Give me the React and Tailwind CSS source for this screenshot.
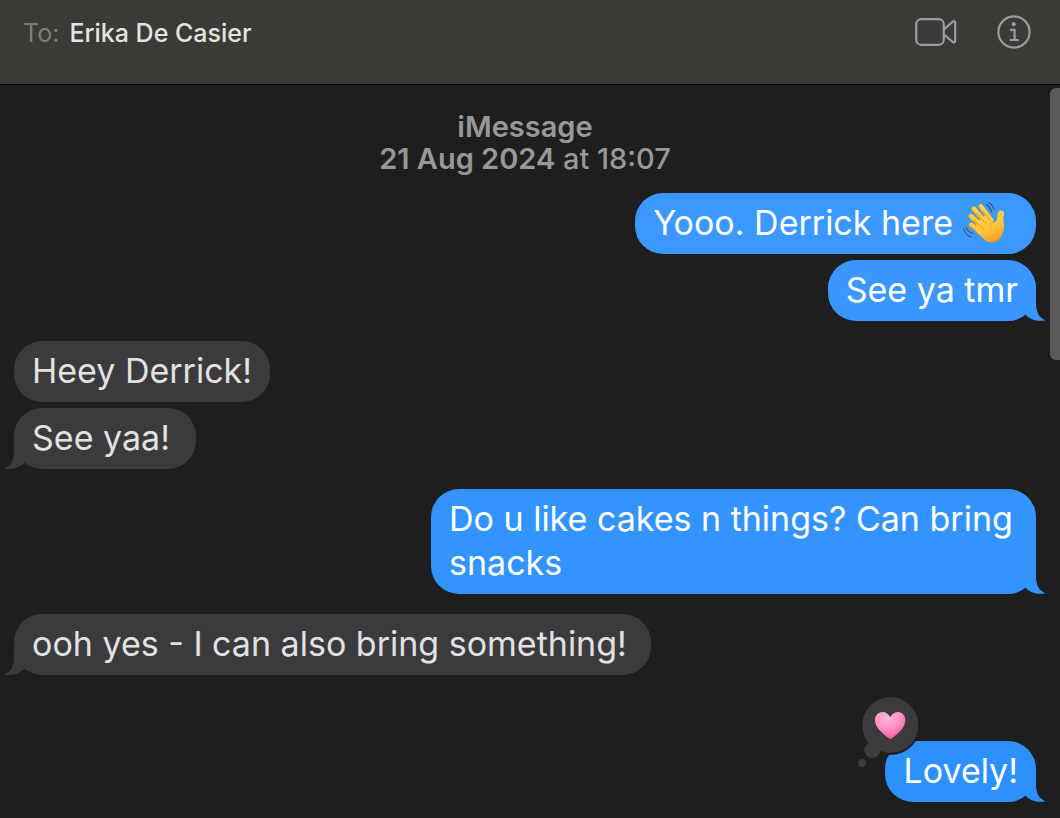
const messages = [
    { id: 1, text: "Yooo. Derrick here", mine: true, wave: true, color: "bg-[#3b98ff]", spacing: "mt-[18px]", padding: "pl-[18px] pr-[31px]" },
    { id: 2, text: "See ya tmr", mine: true, tail: true, color: "bg-[#3a97ff]", tailColor: "text-[#3a97ff]", spacing: "mt-[6px]", padding: "px-[18px]" },
    { id: 3, text: "Heey Derrick!", color: "bg-[#3b3b3d]", spacing: "mt-5", padding: "px-[18px]" },
    { id: 4, text: "See yaa!", tail: true, color: "bg-[#3b3b3d]", tailColor: "text-[#3b3b3d]", spacing: "mt-[6px]", padding: "pl-[18px] pr-[26px]" },
    { id: 5, text: "Do u like cakes n things? Can bring snacks", mine: true, tail: true, color: "bg-[#3394ff]", tailColor: "text-[#3394ff]", spacing: "mt-5", padding: "px-[18px]" },
    { id: 6, text: "ooh yes - I can also bring something!", tail: true, color: "bg-[#3b3b3d]", tailColor: "text-[#3b3b3d]", spacing: "mt-5", padding: "pl-[18px] pr-[24px]" },
    { id: 7, text: "Lovely!", mine: true, tail: true, loved: true, color: "bg-[#2d90ff]", tailColor: "text-[#2d90ff]", spacing: "mt-[66px]", padding: "px-[18px]" }
]

function VideoIcon() {
    return (
        <svg width="42" height="28" viewBox="0 0 42 28" fill="none" stroke="currentColor" strokeWidth="2.2" strokeLinejoin="round">
            <rect x="1.2" y="1.2" width="27.6" height="25.6" rx="5" />
            <path d="M29 11.5 37.6 3.6C38.8 2.6 40.2 3.2 40.2 4.6V22.8C40.2 24.2 38.8 24.8 37.6 23.8L29 16.5" />
        </svg>
    )
}

function InfoIcon() {
    return (
        <svg width="34" height="34" viewBox="0 0 34 34" fill="none" stroke="currentColor" strokeWidth="2.2" strokeLinecap="round" strokeLinejoin="round">
            <circle cx="17" cy="17" r="15.6" />
            <circle cx="16.7" cy="9.2" r="2.1" fill="currentColor" stroke="none" />
            <path d="M13.8 14.8H17.6V25M13.6 25H21" />
        </svg>
    )
}

function WaveEmoji() {
    return (
        <svg role="img" aria-label="Waving hand" className="shrink-0" width="42" height="43" viewBox="36 32 126 128" fill="none">
            <defs>
                <linearGradient id="skin" x1="70" y1="50" x2="125" y2="158" gradientUnits="userSpaceOnUse">
                    <stop offset="0" stopColor="#ffd24a" />
                    <stop offset="0.65" stopColor="#ffc53a" />
                    <stop offset="1" stopColor="#f09a1c" />
                </linearGradient>
            </defs>
            <g stroke="#e5981e" strokeWidth="15" strokeLinecap="round">
                <path d="M89 48 120 90M68 55 106 100M59 77 98 113M60 103 95 131" />
            </g>
            <g stroke="url(#skin)" strokeWidth="12" strokeLinecap="round">
                <path d="M90 47 122 90M69 54 108 100M60 76 100 113M61 102 97 131" />
            </g>
            <path
                d="M104 72 124 93C131 99 137 92 138 84L140 69C142 60 149 57 155 61C160 64 161 70 158 77C155 87 160 96 159 108C158 126 151 141 140 150C129 158 116 158 104 150L78 127 75 100Z"
                fill="url(#skin)"
            />
            <path d="M94 61 117 88M76 69 106 101M70 91 98 116" stroke="#d98c20" strokeWidth="2.5" strokeLinecap="round" />
            <path d="M125 94C119 98 116 105 119 113" stroke="#e6a329" strokeWidth="2.5" strokeLinecap="round" />
            <path d="M107 43Q118 50 122 65M113 36Q126 43 130 58M45 110Q51 126 66 129M38 115Q44 134 60 139" stroke="#455466" strokeWidth="3.5" strokeLinecap="round" />
        </svg>
    )
}

function Tail({ mine, color }) {
    return (
        <svg
            aria-hidden="true"
            className={`absolute bottom-0 ${color} ${mine ? "-right-[10px]" : "-left-[10px] -scale-x-100"}`}
            width="21"
            height="28"
            viewBox="225 309 63 84"
        >
            <path d="M258 309V340C258 366 267 384 287 391C264 396 240 389 228 376L225 366 250 309Z" fill="currentColor" />
        </svg>
    )
}

function HeartReaction() {
    return (
        <svg role="img" aria-label="Loved" className="absolute -left-7 -top-[46px]" width="64" height="74" viewBox="51 30 192 222">
            <defs>
                <radialGradient id="heart" cx="0.4" cy="0.2" r="0.85">
                    <stop offset="0" stopColor="#ffb8da" />
                    <stop offset="0.55" stopColor="#ff8fc2" />
                    <stop offset="1" stopColor="#f9488f" />
                </radialGradient>
            </defs>
            <circle cx="151" cy="120" r="90" fill="#1e1e1e" />
            <g fill="#3b3b3d">
                <circle cx="151" cy="120" r="84" />
                <circle cx="97" cy="195" r="24" />
                <circle cx="66" cy="234" r="12" />
            </g>
            <path
                d="M151 97C146 87 137 81 128 81C113 81 105 92 105 106C105 130 132 148 146 160C149 163 153 163 156 160C170 148 196 130 196 106C196 92 188 81 174 81C164 81 156 87 151 97Z"
                fill="url(#heart)"
            />
        </svg>
    )
}

function Message({ message }) {
    const { text, mine, tail, tailColor, color, spacing, padding, wave, loved } = message

    return (
        <li className={`flex ${spacing} ${mine ? "justify-end" : "justify-start"}`}>
            <div
                className={`relative flex rounded-[28px] pt-2 pb-[9px] text-[34px] leading-[44px] ${color} ${padding} ${
                    mine ? "max-w-[605px] text-white" : "max-w-[640px] text-[#e2e2e2]"
                }`}
            >
                {tail && <Tail mine={mine} color={tailColor} />}
                <p>{text}</p>
                {wave && (
                    <span className="ml-[10px]">
                        <WaveEmoji />
                    </span>
                )}
                {loved && <HeartReaction />}
            </div>
        </li>
    )
}

function App() {
    return (
        <div className="flex min-h-screen flex-col bg-[#1e1e1e] font-['Inter',sans-serif]">
            <header className="flex h-[85px] items-start justify-between border-b border-black bg-[#3a3a37] pr-[29px] pl-[23px]">
                <h1 className="flex gap-[10px] pt-[17px] text-[25px] leading-8 font-medium text-[#e4e4e2]">
                    <span className="font-normal text-[#7d7d7b]">To:</span>
                    Erika De Casier
                </h1>
                <div className="flex items-center gap-10 pt-[15px] text-[#9c9c9a]">
                    <button type="button" aria-label="Start video call">
                        <VideoIcon />
                    </button>
                    <button type="button" aria-label="Conversation details">
                        <InfoIcon />
                    </button>
                </div>
            </header>

            <div className="flex flex-1 items-start">
                <main className="flex-1 pt-[26px] pr-[14px] pb-4 pl-[14px]">
                    <div className="text-center text-[29px] leading-8 text-[#98989a]">
                        <p className="font-semibold">iMessage</p>
                        <p className="font-medium">
                            <span className="font-semibold">21 Aug 2024</span> at 18:07
                        </p>
                    </div>
                    <ul>
                        {messages.map((message) => (
                            <Message key={message.id} message={message} />
                        ))}
                    </ul>
                </main>
                <div className="mt-[3px] h-[272px] w-[10px] rounded-l-md bg-[#5a5a5a]" />
            </div>
        </div>
    )
}

export default App
